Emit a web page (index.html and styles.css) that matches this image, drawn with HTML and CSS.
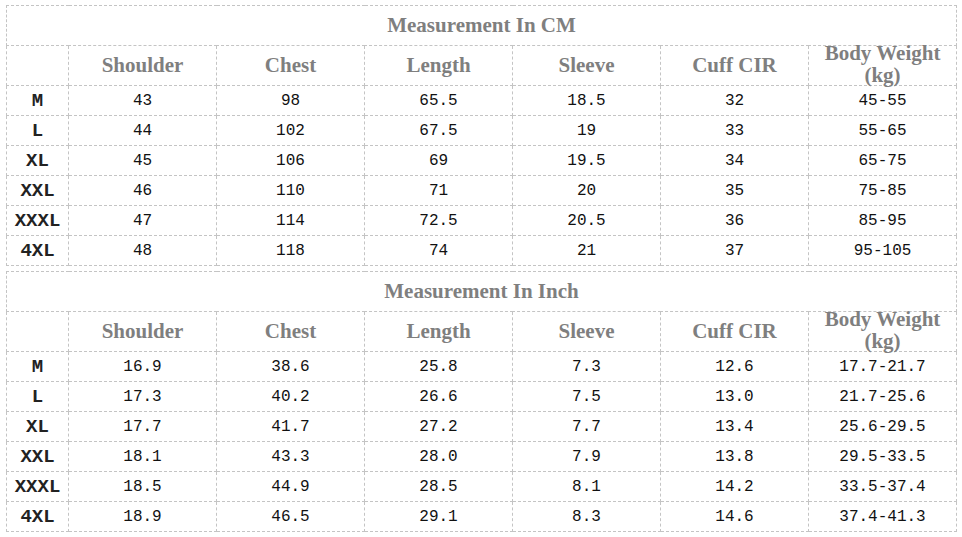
FILE: index.html
```html
<!DOCTYPE html>
<html>
<head>
<meta charset="utf-8">
<link rel="stylesheet" href="styles.css">
</head>
<body>
<div class="page">
  <table class="chart">
    <colgroup><col class="c-size"><col class="c-val"><col class="c-val"><col class="c-val"><col class="c-val"><col class="c-val"><col class="c-val"></colgroup>
    <tr class="title-row"><td colspan="7" class="title">Measurement In CM</td></tr>
    <tr class="head-row">
      <td></td><td class="head">Shoulder</td><td class="head">Chest</td><td class="head">Length</td><td class="head">Sleeve</td><td class="head">Cuff CIR</td>
      <td class="head"><div class="two"><span>Body Weight<br>(kg)</span></div></td>
    </tr>
    <tr><td class="size">M</td><td>43</td><td>98</td><td>65.5</td><td>18.5</td><td>32</td><td>45-55</td></tr>
    <tr><td class="size">L</td><td>44</td><td>102</td><td>67.5</td><td>19</td><td>33</td><td>55-65</td></tr>
    <tr><td class="size">XL</td><td>45</td><td>106</td><td>69</td><td>19.5</td><td>34</td><td>65-75</td></tr>
    <tr><td class="size">XXL</td><td>46</td><td>110</td><td>71</td><td>20</td><td>35</td><td>75-85</td></tr>
    <tr><td class="size">XXXL</td><td>47</td><td>114</td><td>72.5</td><td>20.5</td><td>36</td><td>85-95</td></tr>
    <tr><td class="size">4XL</td><td>48</td><td>118</td><td>74</td><td>21</td><td>37</td><td>95-105</td></tr>
  </table>
  <table class="chart">
    <colgroup><col class="c-size"><col class="c-val"><col class="c-val"><col class="c-val"><col class="c-val"><col class="c-val"><col class="c-val"></colgroup>
    <tr class="title-row"><td colspan="7" class="title">Measurement In Inch</td></tr>
    <tr class="head-row">
      <td></td><td class="head">Shoulder</td><td class="head">Chest</td><td class="head">Length</td><td class="head">Sleeve</td><td class="head">Cuff CIR</td>
      <td class="head"><div class="two"><span>Body Weight<br>(kg)</span></div></td>
    </tr>
    <tr><td class="size">M</td><td>16.9</td><td>38.6</td><td>25.8</td><td>7.3</td><td>12.6</td><td>17.7-21.7</td></tr>
    <tr><td class="size">L</td><td>17.3</td><td>40.2</td><td>26.6</td><td>7.5</td><td>13.0</td><td>21.7-25.6</td></tr>
    <tr><td class="size">XL</td><td>17.7</td><td>41.7</td><td>27.2</td><td>7.7</td><td>13.4</td><td>25.6-29.5</td></tr>
    <tr><td class="size">XXL</td><td>18.1</td><td>43.3</td><td>28.0</td><td>7.9</td><td>13.8</td><td>29.5-33.5</td></tr>
    <tr><td class="size">XXXL</td><td>18.5</td><td>44.9</td><td>28.5</td><td>8.1</td><td>14.2</td><td>33.5-37.4</td></tr>
    <tr><td class="size">4XL</td><td>18.9</td><td>46.5</td><td>29.1</td><td>8.3</td><td>14.6</td><td>37.4-41.3</td></tr>
  </table>
</div>
</body>
</html>
```

FILE: styles.css
```css
html, body {
  margin: 0;
  padding: 0;
  background: #ffffff;
}
.page {
  padding: 5px 6px 0 6px;
  display: flex;
  flex-direction: column;
  gap: 5px;
}
.chart {
  width: 951px;
  border-collapse: collapse;
  table-layout: fixed;
}
.c-size { width: 62px; }
.c-val { width: 148px; }
.chart td {
  border: 1px dashed #c4c4c4;
  padding: 0;
  height: 29px;
  text-align: center;
  vertical-align: middle;
  font-family: "Liberation Mono", "Courier New", monospace;
  font-size: 16px;
  color: #111111;
  white-space: nowrap;
}
.chart .title-row td,
.chart .head-row td {
  height: 39px;
}
.chart td.title,
.chart td.head {
  font-family: "Liberation Serif", "Times New Roman", serif;
  font-weight: bold;
  font-size: 21px;
  color: #7f7f7f;
}
.chart td.size {
  font-weight: bold;
  font-size: 19px;
  color: #222222;
}
.two {
  height: 39px;
  display: flex;
  align-items: center;
  justify-content: center;
}
.two span {
  display: block;
  line-height: 22px;
  margin-top: -4px;
}
```
